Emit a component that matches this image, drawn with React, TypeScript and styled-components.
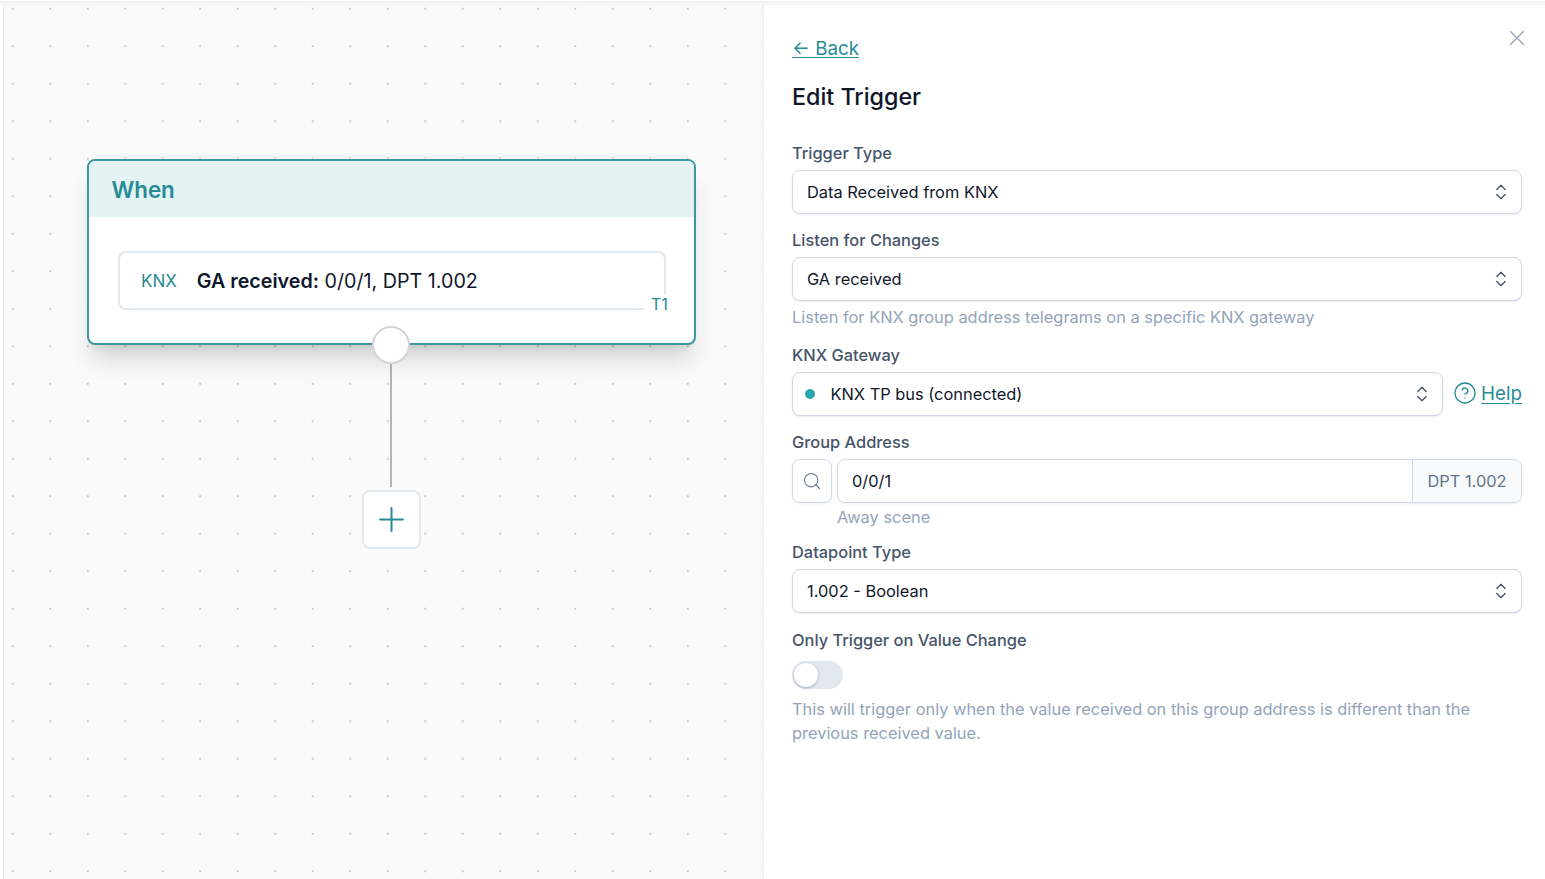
import styled, { createGlobalStyle } from "styled-components";
import { ChevronsUpDown, CircleHelp, Plus, Search, X } from "lucide-react";

const GlobalStyle = createGlobalStyle`
  html, body {
    margin: 0;
    height: 100%;
    overflow: hidden;
    background: #ffffff;
    font-family: Inter, "Liberation Sans", sans-serif;
  }
  * {
    box-sizing: border-box;
  }
`;

const Page = styled.div`
  display: flex;
  flex-direction: column;
  width: 1545px;
  height: 879px;
`;

const TopStrip = styled.div`
  height: 5px;
  flex: none;
  background: linear-gradient(#ffffff 0, #ffffff 1px, #f3f3f4 1px, #f8f8f8 100%);
`;

const Main = styled.div`
  flex: 1;
  display: flex;
  min-height: 0;
`;

const Canvas = styled.div`
  width: 761px;
  flex: none;
  margin-left: 3px;
  padding: 154px 0 0 83px;
  border-left: 1px solid #e8ecf2;
  border-right: 2px solid #eef1f5;
  background-color: #fafafa;
  background-image: radial-gradient(circle at center, #c9c9cc 0, #c9c9cc 1px, transparent 1.2px);
  background-size: 37.5px 37.5px;
  background-position: -10px -15px;
  display: flex;
  flex-direction: column;
  align-items: flex-start;
`;

const Flow = styled.div`
  width: 608px;
  display: flex;
  flex-direction: column;
  align-items: center;
`;

const CardWrap = styled.div`
  position: relative;
  width: 609px;
  align-self: flex-start;
`;

const WhenCard = styled.div`
  width: 100%;
  height: 186px;
  background: #ffffff;
  border: 2px solid #3c98a0;
  border-radius: 8px;
  overflow: hidden;
  box-shadow: 0 20px 25px -5px rgba(0, 0, 0, 0.14), 0 8px 10px -6px rgba(0, 0, 0, 0.1);
`;

const CardHeader = styled.div`
  height: 56px;
  display: flex;
  align-items: center;
  padding: 0 22.5px;
  background: #e3f2f2;
  color: #278c95;
  font-size: 22.3px;
  font-weight: 600;
`;

const CardBody = styled.div`
  padding: 34px 28px 0 28.5px;
`;

const TriggerRow = styled.div`
  position: relative;
  height: 59px;
  display: flex;
  align-items: center;
  padding: 1px 22px 0 21.5px;
  gap: 20px;
  border: 2px solid #e2e8f0;
  border-radius: 8px;
  font-size: 19.7px;
  color: #0f172a;
`;

const Source = styled.span`
  color: #278c95;
  font-size: 17px;
`;

const TriggerText = styled.span`
  b {
    font-weight: 600;
  }
`;

const TriggerTag = styled.span`
  position: absolute;
  right: -4px;
  bottom: -6px;
  padding-left: 7px;
  background: #ffffff;
  color: #278c95;
  font-size: 16.4px;
  line-height: 20px;
`;

const Port = styled.div`
  position: absolute;
  left: 50%;
  bottom: -19px;
  width: 38px;
  height: 38px;
  margin-left: -20px;
  background: #ffffff;
  border: 2px solid #d4d4d8;
  border-radius: 50%;
`;

const Connector = styled.div`
  width: 2px;
  height: 124px;
  margin-top: 18px;
  margin-bottom: 3px;
  background: #b4b4ba;
`;

const AddButton = styled.button`
  width: 59px;
  height: 59px;
  padding: 0;
  display: flex;
  align-items: center;
  justify-content: center;
  background: #ffffff;
  color: #278c95;
  border: 2px solid #e2e8f0;
  border-radius: 8px;
`;

const Panel = styled.div`
  position: relative;
  flex: 1;
  padding: 31px 23px 0 28px;
  background: #ffffff;
  font-size: 16.4px;
`;

const CloseButton = styled.button`
  position: absolute;
  top: 20px;
  right: 15px;
  padding: 0;
  display: flex;
  background: none;
  border: none;
  color: #94a3b8;
`;

const BackLink = styled.a`
  display: block;
  width: fit-content;
  height: 26px;
  color: #278c95;
  font-size: 18.8px;
  line-height: 26px;
  text-decoration: underline;
  text-underline-offset: 2px;
`;

const Title = styled.h2`
  margin: 19px 0 0;
  color: #0f172a;
  font-size: 23.3px;
  font-weight: 500;
  line-height: 32px;
`;

const Field = styled.div<{ $top: number }>`
  margin-top: ${(props) => props.$top}px;
`;

const Label = styled.div`
  height: 24px;
  margin-bottom: 5px;
  color: #475569;
  font-weight: 500;
  line-height: 24px;
`;

const Select = styled.div`
  flex: 1;
  height: 44px;
  display: flex;
  align-items: center;
  padding: 0 10px 0 14px;
  background: #ffffff;
  border: 1.5px solid #cfd8e4;
  border-radius: 8px;
  box-shadow: 0 1px 2px rgba(15, 23, 42, 0.08);
  color: #0f172a;
`;

const SelectValue = styled.span`
  flex: 1;
  display: flex;
  align-items: center;
`;

const StatusDot = styled.span`
  width: 10px;
  height: 10px;
  margin: 0 16px 0 -2.5px;
  border-radius: 50%;
  background: #2ba5ab;
`;

const ArrowIcon = styled(ChevronsUpDown)`
  color: #475569;
  flex: none;
`;

const Hint = styled.div`
  margin-top: 4px;
  color: #94a3b8;
  line-height: 24px;
`;

const GatewayRow = styled.div`
  display: flex;
  align-items: center;
  gap: 10px;
`;

const HelpLink = styled.a`
  display: inline-flex;
  align-items: center;
  gap: 4px;
  margin-top: -2px;
  color: #278c95;
  font-size: 18.8px;
  text-decoration: underline;
  text-underline-offset: 3px;
`;

const AddressRow = styled.div`
  display: flex;
  gap: 5px;
`;

const SearchButton = styled.div`
  width: 40px;
  height: 44px;
  flex: none;
  display: flex;
  align-items: center;
  justify-content: center;
  color: #64748b;
  border: 1.5px solid #cfd8e4;
  border-radius: 8px;
  box-shadow: 0 1px 2px rgba(15, 23, 42, 0.08);
`;

const AddressInput = styled.div`
  flex: 1;
  height: 44px;
  display: flex;
  align-items: stretch;
  border: 1.5px solid #cfd8e4;
  border-radius: 8px;
  box-shadow: 0 1px 2px rgba(15, 23, 42, 0.08);
  overflow: hidden;
  color: #0f172a;
`;

const AddressValue = styled.div`
  flex: 1;
  display: flex;
  align-items: center;
  padding-left: 14px;
`;

const AddressAddon = styled.div`
  width: 109px;
  display: flex;
  align-items: center;
  justify-content: center;
  border-left: 1.5px solid #cfd8e4;
  background: #f8fafc;
  color: #64748b;
`;

const AddressName = styled(Hint)`
  margin: 2px 0 0 45px;
`;

const Toggle = styled.div`
  width: 51px;
  height: 28px;
  padding: 2px;
  margin-top: 9px;
  border-radius: 14px;
  background: #e2e8f0;
`;

const Knob = styled.div`
  width: 24px;
  height: 24px;
  border-radius: 50%;
  background: #ffffff;
  box-shadow: 0 1px 3px rgba(15, 23, 42, 0.3);
`;

const ToggleHint = styled(Hint)`
  margin-top: 8px;
`;

function SelectBox({ value, dot }: { value: string; dot?: boolean }) {
  return (
    <Select>
      <SelectValue>
        {dot && <StatusDot />}
        {value}
      </SelectValue>
      <ArrowIcon size={20} strokeWidth={1.6} />
    </Select>
  );
}

export default function App() {
  return (
    <>
      <GlobalStyle />
      <Page>
        <TopStrip />
        <Main>
          <Canvas>
            <Flow>
              <CardWrap>
                <WhenCard>
                  <CardHeader>When</CardHeader>
                  <CardBody>
                    <TriggerRow>
                      <Source>KNX</Source>
                      <TriggerText>
                        <b>GA received:</b> 0/0/1, DPT 1.002
                      </TriggerText>
                      <TriggerTag>T1</TriggerTag>
                    </TriggerRow>
                  </CardBody>
                </WhenCard>
                <Port />
              </CardWrap>
              <Connector />
              <AddButton>
                <Plus size={39} strokeWidth={1.25} />
              </AddButton>
            </Flow>
          </Canvas>
          <Panel>
            <CloseButton>
              <X size={26} strokeWidth={1.25} />
            </CloseButton>
            <BackLink>← Back</BackLink>
            <Title>Edit Trigger</Title>
            <Field $top={28}>
              <Label>Trigger Type</Label>
              <SelectBox value="Data Received from KNX" />
            </Field>
            <Field $top={14}>
              <Label>Listen for Changes</Label>
              <SelectBox value="GA received" />
              <Hint>Listen for KNX group address telegrams on a specific KNX gateway</Hint>
            </Field>
            <Field $top={14}>
              <Label>KNX Gateway</Label>
              <GatewayRow>
                <SelectBox value="KNX TP bus (connected)" dot />
                <HelpLink>
                  <CircleHelp size={24} strokeWidth={1.3} />
                  Help
                </HelpLink>
              </GatewayRow>
            </Field>
            <Field $top={14}>
              <Label>Group Address</Label>
              <AddressRow>
                <SearchButton>
                  <Search size={20} strokeWidth={1.3} />
                </SearchButton>
                <AddressInput>
                  <AddressValue>0/0/1</AddressValue>
                  <AddressAddon>DPT 1.002</AddressAddon>
                </AddressInput>
              </AddressRow>
              <AddressName>Away scene</AddressName>
            </Field>
            <Field $top={11}>
              <Label>Datapoint Type</Label>
              <SelectBox value="1.002 - Boolean" />
            </Field>
            <Field $top={15}>
              <Label>Only Trigger on Value Change</Label>
              <Toggle>
                <Knob />
              </Toggle>
              <ToggleHint>
                This will trigger only when the value received on this group address is different than the previous received value.
              </ToggleHint>
            </Field>
          </Panel>
        </Main>
      </Page>
    </>
  );
}
